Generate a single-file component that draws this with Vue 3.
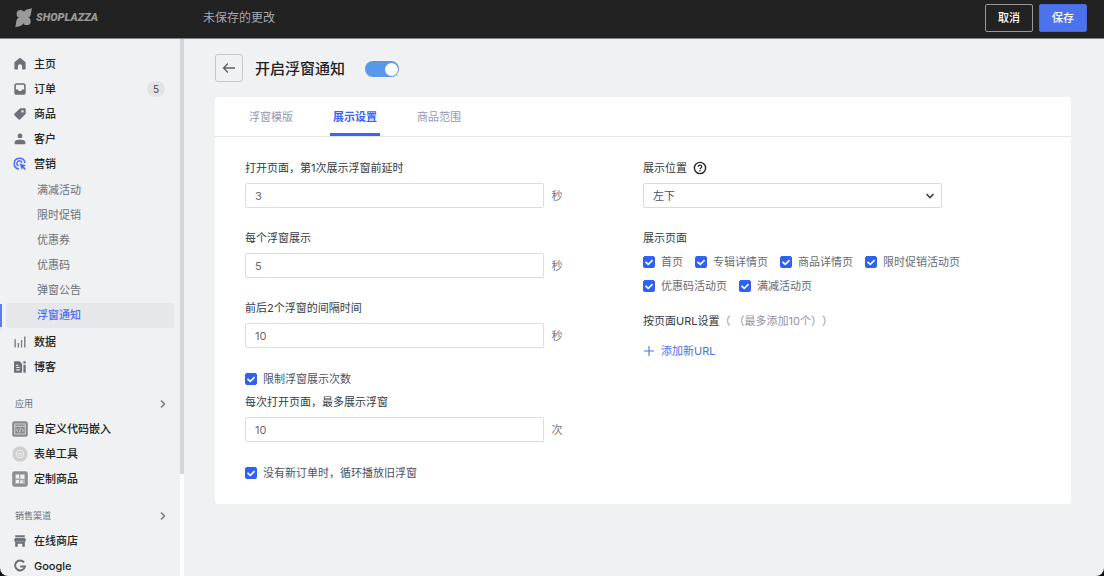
<script setup>
import { ref } from 'vue'

const enabled = ref(true)
const activeTab = ref('展示设置')
const tabs = ['浮窗模版', '展示设置', '商品范围']
const delay = ref('3')
const duration = ref('5')
const interval = ref('10')
const limited = ref(true)
const maxCount = ref('10')
const loop = ref(true)
const position = ref('左下')

const mainMenu = [
  { icon: 'home', label: '主页' },
  { icon: 'order', label: '订单', badge: 5 },
  { icon: 'tag', label: '商品' },
  { icon: 'user', label: '客户' },
  { icon: 'target', label: '营销' },
]
const subMenu = ['满减活动', '限时促销', '优惠券', '优惠码', '弹窗公告', '浮窗通知']
const lowerMenu = [
  { icon: 'chart', label: '数据' },
  { icon: 'blog', label: '博客' },
]
const groups = [
  {
    title: '应用',
    items: [
      { icon: 'code', label: '自定义代码嵌入' },
      { icon: 'form', label: '表单工具' },
      { icon: 'custom', label: '定制商品' },
    ],
  },
  {
    title: '销售渠道',
    items: [
      { icon: 'shop', label: '在线商店' },
      { icon: 'google', label: 'Google' },
    ],
  },
]
const icons = {
  home: '<path fill="#6b7177" d="M8 2c.4 0 .7.1 1 .4l4.100 3.400c.3.3.5.6.5 1v5.800c0 .6-.4 1-1 1h-2.500V10.400a2.100 2.100 0 0 0-4.200 0v3.200H3.400c-.6 0-1-.4-1-1V6.800c0-.4.2-.7.5-1L7 2.400c.3-.3.6-.4 1-.4z"/>',
  order: '<path fill="#6b7177" fill-rule="evenodd" d="M4.600 2.300h6.800c1.400 0 2.300.9 2.300 2.300v6.800c0 1.400-.9 2.300-2.300 2.300H4.600c-1.400 0-2.300-.9-2.300-2.300V4.600c0-1.400.9-2.300 2.300-2.300zm0 1.500c-.4 0-.7.3-.7.7v3.900h2l.8 1.500h2.600l.8-1.500h2V4.500c0-.4-.3-.7-.7-.7z"/>',
  tag: '<path fill="#6b7177" fill-rule="evenodd" d="M8.800 2.300h3.900c.6 0 1 .4 1 1v3.900c0 .4-.1.700-.4 1l-5 5c-.6.600-1.300.600-1.900 0L2.600 9.500c-.6-.6-.6-1.300 0-1.900l5.100-4.900c.3-.3.700-.4 1.100-.4zm1.700 1.900a1.200 1.200 0 1 0 0 2.400 1.200 1.200 0 0 0 0-2.400z"/>',
  user: '<circle cx="8" cy="4.900" r="2.400" fill="#6b7177"/><path fill="#6b7177" d="M6.500 8.700h3c2.400 0 4 1.200 4 3 0 1-.6 1.600-1.700 1.600H4.200c-1.100 0-1.700-.6-1.700-1.600 0-1.800 1.600-3 4-3z"/>',
  target: '<g fill="none" stroke="#4a6ff0" stroke-width="1.500" stroke-linecap="round"><path d="M6.500 12.900A5.400 5.400 0 1 1 12.900 6.500"/><path d="M6 9.600A2.600 2.600 0 1 1 9.800 6.300"/></g><path fill="#4a6ff0" d="M7.500 7.300l6.600 2.300-2.300 1.200 2 2-1.100 1.100-2-2-1 2.100z"/>',
  chart: '<g fill="#777c81"><rect x="2.500" y="5" width="1.300" height="8.500"/><rect x="5.700" y="9" width="1.300" height="4.500"/><rect x="8.900" y="6" width="1.300" height="7.500"/><rect x="12.100" y="2.500" width="1.400" height="11"/></g>',
  blog: '<path fill="#6b7177" fill-rule="evenodd" d="M3 2.300h4.600l2.500 2.500v7.900c0 .6-.3 1-1 1H3c-.6 0-1-.4-1-1V3.300c0-.6.4-1 1-1zm1.300 3.400v1.200h2V5.700zm0 2.300v1.100h3.400V8zm0 2.300v1.200h3.400v-1.200z"/><path fill="#6b7177" d="M11.400 2.300h2.300v2.200h-2.300zM11.400 5.800h2.300v7.900h-2.300z"/>',
  code: '<rect x=".2" y=".2" width="15.600" height="15.600" rx="2.500" fill="#8b8b8b"/><g fill="none" stroke="#e2e2e2" stroke-width=".8"><rect x="2.800" y="3" width="10.400" height="10"/><path d="M3 5.300h10M5.900 7.500L4.400 9.200l1.500 1.700M10.100 7.500l1.500 1.700-1.500 1.700M8.800 6.900L7.200 11.500"/></g>',
  form: '<circle cx="8" cy="8" r="7.700" fill="#cfcfcf"/><circle cx="8" cy="8" r="3.800" fill="none" stroke="#eee"/><path d="M6 7.300h4M6 9h4" stroke="#eee" stroke-width=".9"/>',
  custom: '<rect x=".2" y=".2" width="15.600" height="15.600" rx="2.500" fill="#8f8f8f"/><rect x="3.200" y="3.200" width="9.600" height="9.600" fill="#bdbdbd"/><g fill="#f2f2f2"><rect x="4" y="3.800" width="3.200" height="3.600"/><rect x="8.400" y="3.800" width="3.800" height="4.200"/><rect x="4" y="9" width="3.200" height="3"/><rect x="8.400" y="9.500" width="2" height="2.500"/></g><path d="M7.700 3.200v9.600M3.200 8.300h9.600" stroke="#999" stroke-width=".7"/>',
  shop: '<path fill="#6b7177" d="M3.300 2.300h9.400v2H3.300z"/><path fill="#6b7177" d="M3 5h10l.9 2.200c0 1-.8 1.600-1.600 1.600-.9 0-1.400-.5-1.500-1-.3.600-.8 1-1.500 1S8.200 8.400 8 7.800c-.2.600-.6 1-1.300 1s-1.200-.4-1.500-1c-.1.500-.6 1-1.500 1-.8 0-1.600-.6-1.600-1.600z"/><path fill="#6b7177" d="M3.200 8.500h9.600v5.200h-2.500v-2.900H5.700v2.900H3.200z"/>',
  google: '<path fill="none" stroke="#6b7177" stroke-width="2" d="M12 4.300A5 5 0 1 0 13 8.400H8.200"/>',
}

const pages = ref([
  { label: '首页', on: true },
  { label: '专辑详情页', on: true },
  { label: '商品详情页', on: true },
  { label: '限时促销活动页', on: true },
  { label: '优惠码活动页', on: true },
  { label: '满减活动页', on: true },
])
</script>

<template>
  <div class="app">
    <header class="topbar">
      <div class="brand">
        <svg width="17" height="20" viewBox="0 0 17 20" aria-hidden="true">
          <g fill="#999">
            <circle cx="5.500" cy="6" r="3.900" />
            <circle cx="11.800" cy="13.200" r="3.900" />
            <path d="M17 .300 15.700 6.800C15.300 9 13.600 10.300 11.400 10.300L6 9.800 8.500 5C9.200 2.500 11 1.500 13.200 1.200z" />
            <path d="M.300 19.200 1.300 13.200C1.600 10.800 3.400 9.200 5.600 9.200L11.300 9.500 8.800 14.300C8.200 16.700 6.600 17.800 4.300 18.200z" />
          </g>
        </svg>
        <span class="wordmark">SHOPLAZZA</span>
      </div>
      <div class="unsaved">未保存的更改</div>
      <button class="btn cancel" type="button">取消</button>
      <button class="btn save" type="button">保存</button>
    </header>

    <div class="body">
      <nav class="sidebar">
        <div class="menu">
          <a v-for="m in mainMenu" :key="m.label" href="#" class="item">
            <svg viewBox="0 0 16 16" width="16" height="16" v-html="icons[m.icon]"></svg>
            <span>{{ m.label }}</span>
            <span v-if="m.badge" class="badge">{{ m.badge }}</span>
          </a>
          <div class="sub">
            <a v-for="s in subMenu" :key="s" href="#" class="subitem" :class="{ active: s === '浮窗通知' }">{{ s }}</a>
          </div>
          <a v-for="m in lowerMenu" :key="m.label" href="#" class="item">
            <svg viewBox="0 0 16 16" width="16" height="16" v-html="icons[m.icon]"></svg>
            <span>{{ m.label }}</span>
          </a>
          <section v-for="g in groups" :key="g.title" class="group">
            <a href="#" class="group-title">
              <span>{{ g.title }}</span>
              <svg width="8" height="10" viewBox="0 0 8 10"><path d="M2 1.500 5.500 5 2 8.500" fill="none" stroke="#6b7177" stroke-width="1.300" /></svg>
            </a>
            <a v-for="m in g.items" :key="m.label" href="#" class="item">
              <svg viewBox="0 0 16 16" width="16" height="16" v-html="icons[m.icon]"></svg>
              <span>{{ m.label }}</span>
            </a>
          </section>
        </div>
        <div class="track"><div class="thumb"></div></div>
      </nav>

      <main class="main">
        <div class="heading">
          <button class="back" type="button" aria-label="返回">
            <svg width="14" height="12" viewBox="0 0 14 12"><path d="M13 6H1.500M6 1.500 1.500 6 6 10.500" fill="none" stroke="#5a5f64" stroke-width="1.300" /></svg>
          </button>
          <h1 id="page-title">开启浮窗通知</h1>
          <input v-model="enabled" class="switch" type="checkbox" role="switch" aria-labelledby="page-title" />
        </div>

        <div class="card">
          <div class="tabs" role="tablist">
            <button
              v-for="t in tabs"
              :key="t"
              class="tab"
              :class="{ on: t === activeTab }"
              type="button"
              role="tab"
              :aria-selected="t === activeTab"
              @click="activeTab = t"
            >{{ t }}</button>
          </div>

          <form class="form" @submit.prevent>
            <div class="col">
              <div class="field">
                <label for="delay">打开页面，第1次展示浮窗前延时</label>
                <div class="line"><input id="delay" v-model="delay" class="text" type="text" /><span>秒</span></div>
              </div>
              <div class="field">
                <label for="duration">每个浮窗展示</label>
                <div class="line"><input id="duration" v-model="duration" class="text" type="text" /><span>秒</span></div>
              </div>
              <div class="field">
                <label for="interval">前后2个浮窗的间隔时间</label>
                <div class="line"><input id="interval" v-model="interval" class="text" type="text" /><span>秒</span></div>
              </div>
              <label class="check limit"><input v-model="limited" type="checkbox" />限制浮窗展示次数</label>
              <div class="field">
                <label for="max">每次打开页面，最多展示浮窗</label>
                <div class="line"><input id="max" v-model="maxCount" class="text" type="text" /><span>次</span></div>
              </div>
              <label class="check"><input v-model="loop" type="checkbox" />没有新订单时，循环播放旧浮窗</label>
            </div>

            <div class="col">
              <div class="field">
                <div class="label-row">
                  <label for="position">展示位置</label>
                  <svg width="14" height="14" viewBox="0 0 14 14"><circle cx="7" cy="7" r="5.600" fill="none" stroke="#222" stroke-width="1.400" /><path d="M5.200 5.800C5.200 4.700 6 4.100 7 4.100s1.800.6 1.800 1.500C8.800 6.900 7 6.900 7 8.200" fill="none" stroke="#222" stroke-width="1.200" /><circle cx="7" cy="9.800" r=".8" fill="#222" /></svg>
                </div>
                <div class="select-box">
                  <select id="position" v-model="position"><option>左下</option><option>右下</option></select>
                  <svg width="10" height="8" viewBox="0 0 10 8"><path d="M1.500 2 5 5.500 8.500 2" fill="none" stroke="#3a3f58" stroke-width="1.600" /></svg>
                </div>
              </div>
              <fieldset class="pages">
                <legend>展示页面</legend>
                <div class="page-list">
                  <label v-for="p in pages" :key="p.label" class="check gray"><input v-model="p.on" type="checkbox" />{{ p.label }}</label>
                </div>
              </fieldset>
              <p class="url-title">按页面URL设置<span>（ （最多添加10个））</span></p>
              <button class="add" type="button">
                <svg width="12" height="12" viewBox="0 0 12 12"><path d="M6 1v10M1 6h10" stroke="#4a6ff0" stroke-width="1.100" /></svg>
                添加新URL
              </button>
            </div>
          </form>
        </div>
      </main>
    </div>
  </div>
</template>

<style>
body {
  background: #0d1114;
}
</style>

<style scoped>
.app {
  display: flex;
  flex-direction: column;
  height: 100vh;
  overflow: hidden;
  border-radius: 0 0 8px 8px;
  background: #f0f1f3;
  font-family: Inter, "Noto Sans CJK SC", sans-serif;
  font-size: 11px;
  line-height: 16px;
  color: #333a45;
}
.app * {
  box-sizing: border-box;
}
button,
input,
select {
  font: inherit;
  margin: 0;
}
button {
  cursor: pointer;
}
a {
  color: inherit;
  text-decoration: none;
}
svg {
  flex: none;
}

.topbar {
  flex: none;
  display: flex;
  align-items: center;
  height: 39px;
  padding: 0 17px 3px 15px;
  background: #222;
  border-bottom: 1px solid #858585;
}
.brand {
  display: flex;
  align-items: center;
  gap: 4px;
  width: 188px;
}
.wordmark {
  font: italic 900 11px/18px Roboto, "Liberation Sans", sans-serif;
  color: #999;
}
.unsaved {
  flex: 1;
  font-size: 12px;
  color: #a5a8ad;
}
.btn {
  width: 48px;
  height: 28px;
  padding: 0;
  border-radius: 2px;
  color: #fff;
  font-weight: 500;
}
.cancel {
  margin-right: 6px;
  background: #222;
  border: 1px solid #999;
}
.save {
  background: #4d72ee;
  border: 1px solid #4668dc;
}

.body {
  flex: 1;
  display: flex;
  min-height: 0;
}
.sidebar {
  flex: none;
  display: flex;
  width: 184px;
  overflow: hidden;
}
.menu {
  flex: 1;
  padding-top: 12px;
}
.item {
  display: flex;
  align-items: center;
  gap: 6px;
  height: 25px;
  padding: 0 15px 0 12px;
  font-weight: 500;
  color: #202223;
}
.badge {
  margin-left: auto;
  width: 18px;
  height: 16px;
  border-radius: 8px;
  background: #e2e3e5;
  font-size: 10px;
  text-align: center;
  font-weight: 400;
  color: #444;
}
.sub {
  margin: 2px 0 1px;
}
.subitem {
  display: block;
  height: 25px;
  margin-left: 6px;
  margin-right: 6px;
  padding-left: 31px;
  line-height: 25px;
  color: #6b7075;
}
.subitem.active {
  position: relative;
  background: #e6e7eb;
  color: #4a6ff0;
  font-weight: 500;
}
.subitem.active::before {
  content: "";
  position: absolute;
  left: -6px;
  top: 1px;
  bottom: 1px;
  width: 2px;
  background: #5b7cf2;
}
.group {
  padding-top: 12px;
}
.group-title {
  display: flex;
  align-items: center;
  justify-content: space-between;
  height: 25px;
  padding: 0 13px 0 15px;
  font-size: 9px;
  color: #6b7075;
}
.track {
  width: 4px;
  background: #fff;
}
.thumb {
  height: 81%;
  background: #d3d5d8;
}

.main {
  flex: 1;
  min-width: 0;
  padding: 15px 33px 0 31px;
}
.heading {
  display: flex;
  align-items: center;
  height: 30px;
}
.back {
  align-self: flex-start;
  display: flex;
  align-items: center;
  justify-content: center;
  width: 28px;
  height: 28px;
  padding: 0;
  background: transparent;
  border: 1px solid #c3c6ca;
  border-radius: 3px;
}
h1 {
  margin: 0 20px 0 12px;
  font-size: 15px;
  line-height: 24px;
  font-weight: 500;
  color: #202223;
}
.switch {
  appearance: none;
  display: flex;
  align-items: center;
  justify-content: flex-end;
  width: 34px;
  height: 16px;
  padding: 1px;
  border-radius: 8px;
  background: #5897ea;
}
.switch:not(:checked) {
  justify-content: flex-start;
  background: #b9bdc4;
}
.switch::after {
  content: "";
  width: 13px;
  height: 13px;
  border-radius: 50%;
  background: #fff;
}

.card {
  margin-top: 13px;
  background: #fff;
  border-radius: 3px;
}
.tabs {
  display: flex;
  gap: 34px;
  height: 40px;
  padding: 0 31px;
  border-bottom: 1px solid #e6e7ea;
}
.tab {
  padding: 3px 3px 0;
  background: none;
  border: 0;
  border-bottom: 3px solid transparent;
  color: #9598b3;
}
.tab.on {
  border-bottom-color: #3667f6;
  color: #3667f6;
  font-weight: 700;
}

.form {
  display: grid;
  grid-template-columns: 1fr 1fr;
  padding: 23px 30px 22px;
}
.field {
  margin-bottom: 22px;
}
.field label {
  display: block;
}
.line {
  display: flex;
  align-items: center;
  gap: 8px;
  margin-top: 7px;
  color: #70757c;
}
.text {
  width: 75%;
  height: 25px;
  padding: 0 9px;
  border: 1px solid #dcdde0;
  border-radius: 2px;
  background: #fff;
  color: #666a70;
}
.check {
  display: flex;
  align-items: center;
  gap: 6px;
  height: 18px;
  color: #4b4f68;
}
.check.gray {
  color: #666a70;
}
.check input {
  appearance: none;
  flex: none;
  width: 12px;
  height: 12px;
  border-radius: 2px;
  border: 1px solid #2f62f4;
}
.check input:checked {
  background: #2f62f4;
}
.check input:checked::after {
  content: "";
  display: block;
  width: 10px;
  height: 10px;
  background: #fff;
  clip-path: polygon(20% 43%, 43% 63%, 80% 25%, 91% 37%, 43% 85%, 9% 55%);
}
.limit {
  margin-bottom: 6px;
}
.label-row {
  display: flex;
  align-items: center;
  gap: 6px;
  height: 16px;
}
.select-box {
  position: relative;
  width: 75%;
  margin-top: 7px;
}
.select-box select {
  display: block;
  appearance: none;
  width: 100%;
  height: 25px;
  padding: 0 24px 0 9px;
  border: 1px solid #d3dbe6;
  border-radius: 2px;
  background: #fff;
  color: #4b4f68;
}
.select-box svg {
  position: absolute;
  right: 7px;
  top: 9px;
  pointer-events: none;
}
.pages {
  margin: 0;
  padding: 0;
  border: 0;
}
.pages legend {
  padding: 0;
}
.page-list {
  display: flex;
  flex-wrap: wrap;
  gap: 6px 12px;
  padding-top: 7px;
  padding-right: 48px;
}
.url-title {
  margin: 18px 0 14px;
}
.url-title span {
  color: #8f92ab;
  text-spacing-trim: space-all;
}
.add {
  display: flex;
  align-items: center;
  gap: 6px;
  padding: 0;
  border: 0;
  background: none;
  color: #4a6ff0;
}
</style>
